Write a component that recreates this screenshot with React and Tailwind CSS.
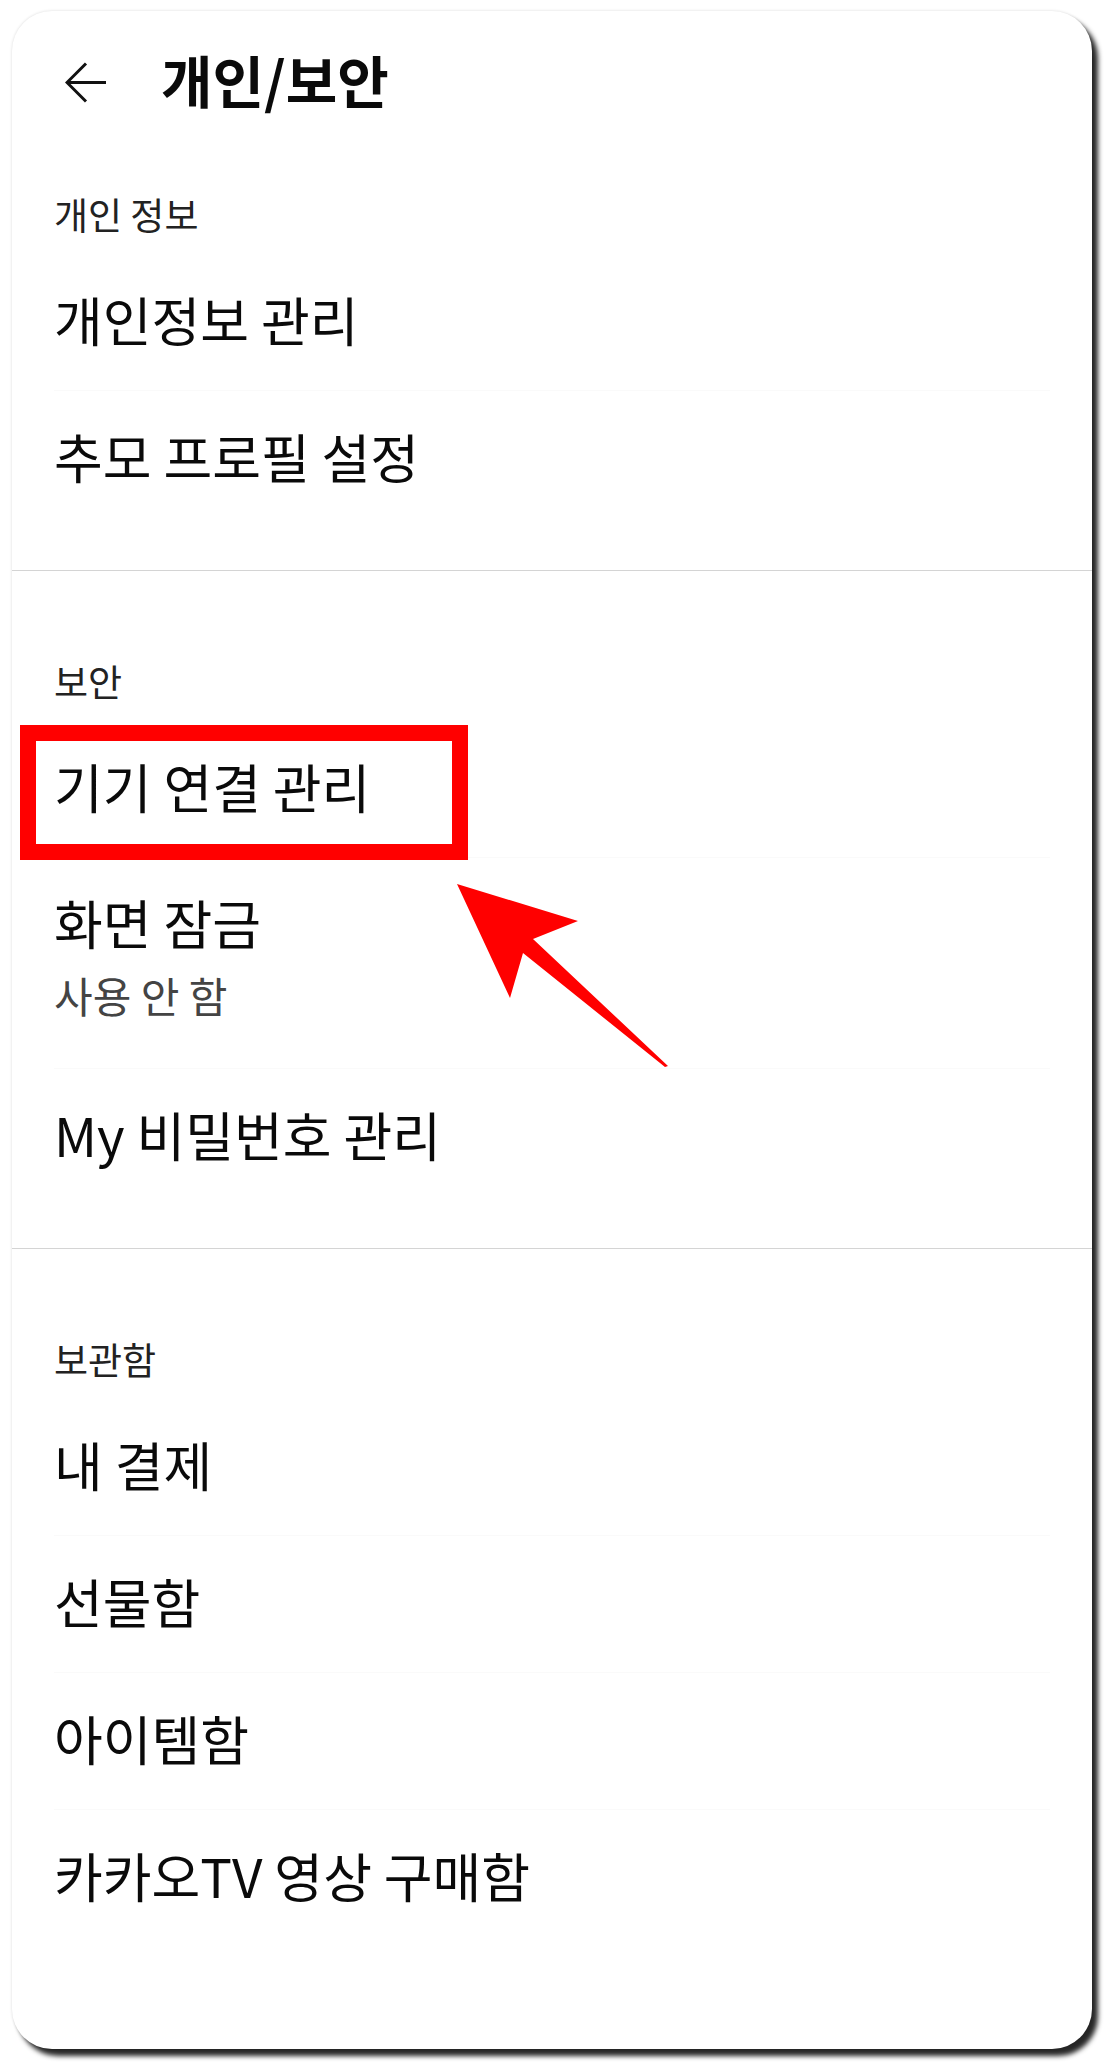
const sections = [
  {
    label: '개인 정보',
    first: true,
    items: [{ title: '개인정보 관리' }, { title: '추모 프로필 설정' }],
  },
  {
    label: '보안',
    items: [
      { title: '기기 연결 관리' },
      { title: '화면 잠금', sub: '사용 안 함' },
      { title: 'My 비밀번호 관리' },
    ],
  },
  {
    label: '보관함',
    last: true,
    items: [
      { title: '내 결제' },
      { title: '선물함' },
      { title: '아이템함' },
      { title: '카카오TV 영상 구매함' },
    ],
  },
]

function BackArrow() {
  return (
    <svg width="41" height="41" viewBox="0 0 41 41" fill="none" stroke="#111" strokeWidth="3">
      <path d="M2 20.5 H41" />
      <path d="M21 1.5 L2 20.5 L21 39.5" strokeLinejoin="miter" />
    </svg>
  )
}

function Row({ item, divider }) {
  const base = divider ? 'border-b border-[#fafafa]' : ''
  if (item.sub) {
    return (
      <div className={`h-[211px] flex flex-col pt-[33px] ${base}`}>
        <span className="text-[53px] leading-[62px] text-[#0a0a0a]">{item.title}</span>
        <span className="mt-[18px] text-[42px] leading-[48px] text-[#444]">{item.sub}</span>
      </div>
    )
  }
  return (
    <div className={`h-[137px] flex items-center pb-[7px] ${base}`}>
      <span className="text-[53px] leading-[62px] text-[#0a0a0a]">{item.title}</span>
    </div>
  )
}

function Section({ section }) {
  return (
    <div
      className={`${section.first ? 'pt-[37px]' : 'pt-[86px]'} ${
        section.last ? 'pb-[102px]' : 'pb-[42px] border-b border-[#d4d4d4]'
      }`}
    >
      <div className="px-[42px] mb-[16px] h-[48px] text-[37px] leading-[48px] text-[#222]">
        {section.label}
      </div>
      <div className="mx-[42px]">
        {section.items.map((item, i) => (
          <Row key={item.title} item={item} divider={i < section.items.length - 1} />
        ))}
      </div>
    </div>
  )
}

export default function App() {
  return (
    <div
      className="min-h-screen bg-white pt-[11px] pl-[12px] pb-[24px]"
      style={{ fontFamily: '"Noto Sans CJK KR", "Noto Sans", sans-serif' }}
    >
      <div className="relative w-[1080px] bg-white rounded-[40px] shadow-[6px_7px_5px_rgba(0,0,0,0.85),0_0_3px_rgba(0,0,0,0.15)]">
        {/* header */}
        <div className="h-[142px] flex items-center pl-[53px]">
          <BackArrow />
          <h1 className="ml-[55px] pb-[7px] text-[56px] leading-[64px] font-bold text-[#0a0a0a]">개인/보안</h1>
        </div>

        {sections.map((s) => (
          <Section key={s.label} section={s} />
        ))}

        {/* annotation: red box */}
        <div className="absolute left-[8px] top-[714px] w-[448px] h-[135px] border-[16px] border-[#ff0000]" />

        {/* annotation: red arrow */}
        <svg
          className="absolute left-[443px] top-[871px]"
          width="216"
          height="188"
          viewBox="0 0 216 188"
        >
          <polygon
            points="2,2 123,39 78,57 213,184 210,185 68,71 55,116"
            fill="#ff0000"
          />
        </svg>
      </div>
    </div>
  )
}
